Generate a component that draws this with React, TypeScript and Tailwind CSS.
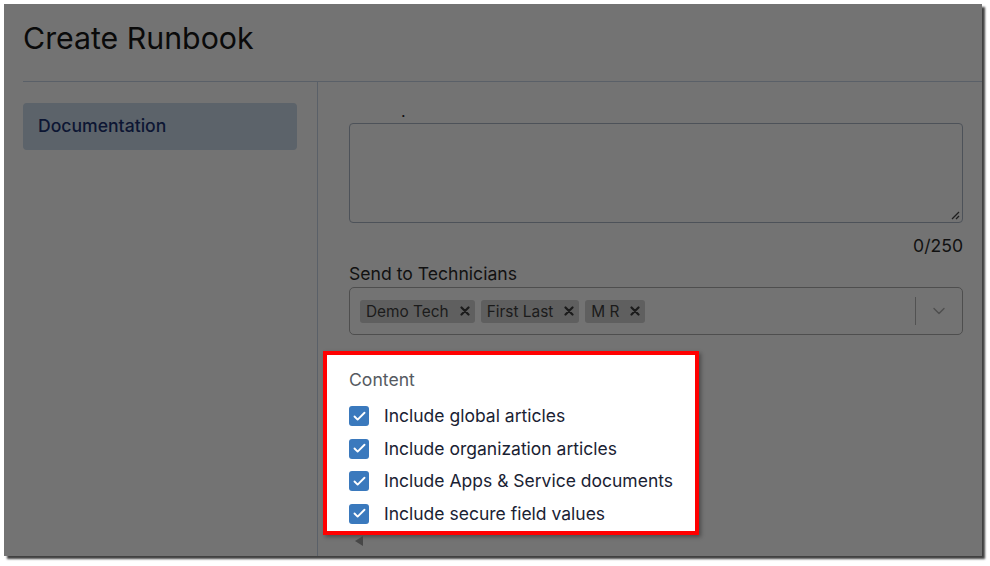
import { Check, ChevronDown } from "lucide-react";

const TECHNICIANS = ["Demo Tech", "First Last", "M R"];

const CONTENT_OPTIONS = [
  "Include global articles",
  "Include organization articles",
  "Include Apps & Service documents",
  "Include secure field values",
];

function Chip({ label }: { label: string }) {
  return (
    <div className="h-[23px] rounded-[3px] bg-[#5f5f5f] pl-[6px] pr-[5px] flex items-center gap-[11px] text-[15.4px] text-[#1b1b1b]">
      <span>{label}</span>
      <svg width="10" height="10" viewBox="0 0 10 10">
        <path d="M1.5 1.5 L8.5 8.5 M8.5 1.5 L1.5 8.5" stroke="#1b1b1b" strokeWidth="2.2" strokeLinecap="round" />
      </svg>
    </div>
  );
}

function CheckRow({ label }: { label: string }) {
  return (
    <div className="h-[32.5px] flex items-center gap-[15px]">
      <div className="w-[20px] h-[20px] rounded-[3px] bg-[#3a79bd] flex items-center justify-center">
        <Check className="w-[15px] h-[15px] text-white" strokeWidth={3} />
      </div>
      <span className="text-[17.5px] text-[#1a2233]">{label}</span>
    </div>
  );
}

export default function App() {
  return (
    <div className="w-[990px] h-[566px] bg-white pt-[4px] pl-[4px] font-[Inter,sans-serif]">
      <div className="w-[978px] h-[552px] bg-[#737373] shadow-[3px_3px_2px_rgba(0,0,0,0.75)] flex flex-col overflow-hidden">
        <div className="ml-[19px] h-[78px] shrink-0 border-b border-[#5a6068] pt-[19px]">
          <h1 className="text-[30.3px] leading-none text-[#0a0a0a]">Create Runbook</h1>
        </div>

        <div className="flex flex-1">
          <aside className="ml-[19px] w-[295px] border-r border-[#5a6068] pt-[21px] pr-[20px]">
            <div className="h-[47px] rounded-[4px] bg-[#5c636a] pl-[15px] flex items-center text-[17.6px] font-medium text-[#0d1633]">
              Documentation
            </div>
          </aside>

          <main className="flex-1 pl-[31px] pr-[19px] pt-[17px] flex flex-col">
            <div className="h-[24px] pl-[52px] text-[16px] leading-[24px] text-[#111]">.</div>
            <div className="relative h-[100px] rounded-[4px] border border-[#4d5259]">
              <svg className="absolute right-[2px] bottom-[2px]" width="9" height="9" viewBox="0 0 9 9">
                <path d="M8 1 L1 8 M8 5 L5 8" stroke="#1e1e1e" strokeWidth="1.3" />
              </svg>
            </div>
            <div className="mt-[10px] text-right text-[17.6px] leading-[26.4px] text-[#111]">0/250</div>
            <div className="mt-[2px] text-[17.6px] leading-[26.4px] text-[#111]">Send to Technicians</div>
            <div className="-mt-[1px] h-[48px] rounded-[5px] border border-[#4e4e4e] flex items-center pl-[10px] pt-[1px]">
              <div className="flex-1 flex items-center gap-[6px]">
                {TECHNICIANS.map((t) => (
                  <Chip key={t} label={t} />
                ))}
              </div>
              <div className="w-px h-[28px] bg-[#525252]" />
              <div className="w-[46px] flex items-center justify-center">
                <ChevronDown className="w-[20px] h-[20px] text-[#4e4e4e]" strokeWidth={1.6} />
              </div>
            </div>

            <section className="mt-[16px] -ml-[26px] w-[376px] h-[184px] border-4 border-[#ff0000] bg-white shadow-[2px_2px_4px_rgba(0,0,0,0.35)] pl-[22px] pt-[12px]">
              <div className="text-[17.6px] leading-[26.4px] text-[#555a61]">Content</div>
              <div className="mt-[7px] flex flex-col">
                {CONTENT_OPTIONS.map((o) => (
                  <CheckRow key={o} label={o} />
                ))}
              </div>
            </section>
            <svg className="mt-[1px] ml-[5px]" width="10" height="11" viewBox="0 0 10 11">
              <path d="M9 0 L9 10 L1 5 Z" fill="#474747" />
            </svg>
          </main>
        </div>
      </div>
    </div>
  );
}
